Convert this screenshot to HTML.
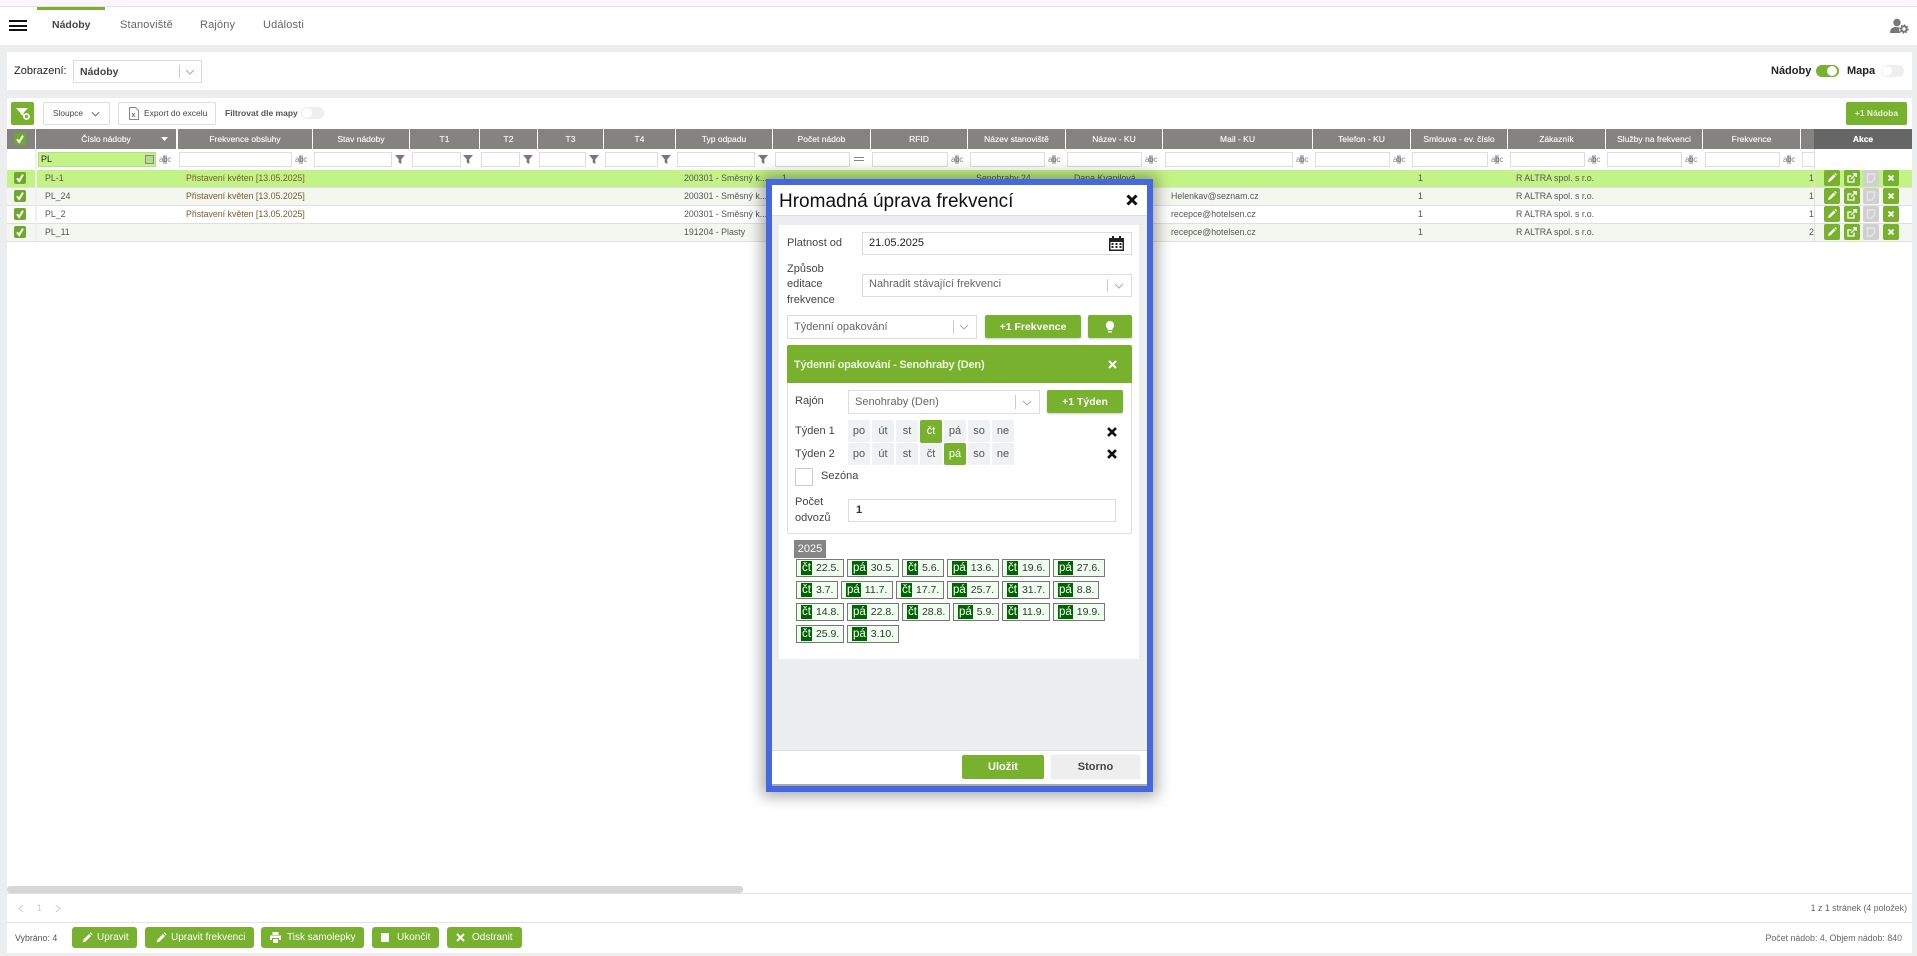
<!DOCTYPE html>
<html lang="cs"><head><meta charset="utf-8"><title>Nádoby</title>
<style>
*{box-sizing:border-box}
html,body{margin:0;padding:0;width:1917px;height:956px;overflow:hidden;background:#ecedef;font-family:"Liberation Sans",sans-serif;color:#333}
.a,.t,.h,.i,.f,.abc,.fn,.b,.cb,.r,.d,.c{position:absolute}
.t{white-space:nowrap;font-size:8.8px;line-height:12px;color:#555}
.h{top:129px;height:20px;background:#858380;color:#f4f4f4;font-size:8.5px;line-height:20px;text-align:center;white-space:nowrap;text-shadow:0 0 .5px #fff}
.i{top:152px;height:15px;background:#fff;border:1px solid #dedede}
.abc{top:153px;font-size:8px;line-height:13px;color:#888;width:12px;text-align:center;letter-spacing:-.3px}
.abc b{font-weight:normal;background:#c4c4c4;color:#666}
.fn{top:154px;width:10px;height:10px;fill:#777}
.b{background:#78b12e;color:#fff;border-radius:2px;font-weight:bold;text-align:center;white-space:nowrap}
.cb{left:14px;width:12px;height:12px;background:#6fa92c;border-radius:2px}
.cb svg,.ab svg{position:absolute;left:0;top:0}
.r{left:7px;width:1905px;height:18px;border-bottom:1px solid #dfe0df}
.ab{position:absolute;width:16px;height:16px;background:#78b12e;border-radius:2px}
.ab.g{background:#d0d0d0}
.sel{position:absolute;background:#fff;border:1px solid #dcdcdc}
.sel span{position:absolute;left:6px;top:0;white-space:nowrap}
.sel i{position:absolute;top:20%;height:60%;width:1px;background:#ccc}
.sel svg{position:absolute}
.d{width:22px;height:22px;background:#f0f1f3;font-size:11px;line-height:23px;text-align:center;color:#555;border-radius:2px}
.d.on{background:#78b12e;color:#fff}
.c{height:18px;border:1px solid #777;background:#eefdee;font-size:10.5px;line-height:16px;color:#333;white-space:nowrap;padding-left:4px}
.c b{display:inline-block;background:#006400;color:#fff;font-weight:normal;font-size:11.5px;height:14px;line-height:14px;padding:0 1px;margin-top:1px;vertical-align:top;margin-right:4px}
.lb{position:absolute;font-size:11px;line-height:14px;color:#444;white-space:nowrap}
.bb{font-size:10px;font-weight:normal;line-height:22px;top:927px;height:21px;border-radius:3px;text-align:left}
</style></head><body>
<svg width="0" height="0" style="position:absolute"><defs>
<symbol id="fu" viewBox="0 0 10 10"><path d="M0 1h10L6.3 5.2V10L3.7 8.5V5.2z"/></symbol>
<symbol id="ck" viewBox="0 0 12 12"><path d="M3 6.2L5.2 9 9 2.6" fill="none" stroke="#fff" stroke-width="2"/></symbol>
<symbol id="pen" viewBox="0 0 16 16"><path d="M4 12l.8-2.6 5-5 1.8 1.8-5 5zM10.400 3.800l.8-.8 1.800 1.800-.8.8z" fill="#fff"/></symbol>
<symbol id="ext" viewBox="0 0 16 16"><path d="M10 8.500V12H4V6h3.500" fill="none" stroke="#fff" stroke-width="1.300"/><path d="M7 9l5-5M9 3.800h3.200V7" fill="none" stroke="#fff" stroke-width="1.300"/></symbol>
<symbol id="sq" viewBox="0 0 16 16"><path d="M4.500 4h7v5l-3 3h-4z" fill="none" stroke="#e6e6e6" stroke-width="1.400"/></symbol>
<symbol id="xx" viewBox="0 0 16 16"><path d="M5.500 5.500l5 5M10.500 5.500l-5 5" stroke="#fff" stroke-width="1.800" fill="none"/></symbol>
<symbol id="xk" viewBox="0 0 16 16"><path d="M3.500 3.500l9 9M12.500 3.500l-9 9" stroke="#111" stroke-width="3" fill="none"/></symbol>
<symbol id="cv" viewBox="0 0 10 6"><path d="M1 1l4 4 4-4" fill="none" stroke="#aaa" stroke-width="1"/></symbol>
</defs></svg>

<!-- top -->
<div class="a" style="left:0;top:0;width:1917px;height:6px;background:#fdf5fd"></div>
<div class="a" style="left:0;top:6px;width:1917px;height:1px;background:#e8e0e8"></div>
<div class="a" style="left:0;top:7px;width:1917px;height:38px;background:#fff"></div>
<div class="a" style="left:37px;top:7px;width:68px;height:3px;background:#78b12e"></div>
<div class="a" style="left:9px;top:20px;width:18px;height:2px;background:#111"></div>
<div class="a" style="left:9px;top:25px;width:18px;height:2px;background:#111"></div>
<div class="a" style="left:9px;top:29px;width:18px;height:2px;background:#111"></div>
<div class="t" style="left:52px;top:19px;font-size:10.5px;font-weight:bold;color:#444">Nádoby</div>
<div class="t" style="left:120px;top:19px;font-size:11px;color:#666;letter-spacing:.15px">Stanoviště</div>
<div class="t" style="left:200px;top:19px;font-size:11px;color:#666;letter-spacing:.15px">Rajóny</div>
<div class="t" style="left:263px;top:19px;font-size:11px;color:#666;letter-spacing:.15px">Události</div>
<svg class="a" style="left:1890px;top:18px" width="20" height="16" viewBox="0 0 20 16"><circle cx="7" cy="4.500" r="3.700" fill="#777"/><path d="M0 15c0-4 2-6 6-6 2 0 3 .4 4.500 1.500V15z" fill="#777"/><circle cx="14" cy="11" r="5" fill="#fff"/><circle cx="14" cy="11" r="2.700" fill="none" stroke="#777" stroke-width="2"/><circle cx="14" cy="11" r="4" fill="none" stroke="#777" stroke-width="1.300" stroke-dasharray="1.500 1.600"/></svg>

<!-- zobrazeni -->
<div class="a" style="left:7px;top:52px;width:1905px;height:38px;background:#fff"></div>
<div class="t" style="left:14px;top:65px;font-size:11px;color:#222">Zobrazení:</div>
<div class="sel" style="left:73px;top:60px;width:129px;height:23px;font-size:10.5px;line-height:22px;font-weight:bold;color:#444"><span style="left:6px">Nádoby</span><i style="left:105px"></i><svg style="left:111px;top:8px" width="10" height="6"><use href="#cv"/></svg></div>
<div class="t" style="left:1771px;top:65px;font-size:11px;font-weight:bold;color:#222">Nádoby</div>
<div class="a" style="left:1816px;top:65px;width:23px;height:12px;border-radius:6px;background:#78b12e"></div>
<div class="a" style="left:1827px;top:66px;width:10px;height:10px;border-radius:5px;background:#fff"></div>
<div class="t" style="left:1847px;top:65px;font-size:11px;font-weight:bold;color:#222">Mapa</div>
<div class="a" style="left:1881px;top:65px;width:23px;height:12px;border-radius:6px;background:#eee"></div>
<div class="a" style="left:1882px;top:66px;width:10px;height:10px;border-radius:5px;background:#fff"></div>

<!-- main -->
<div class="a" style="left:7px;top:98px;width:1905px;height:855px;background:#fff"></div>
<div class="b" style="left:11px;top:102px;width:23px;height:23px"><svg style="position:absolute;left:5px;top:5px" width="14" height="13" viewBox="0 0 14 13"><path d="M0 1h12L7.500 6v3L4.500 7V6z" fill="#fff"/><circle cx="10.500" cy="9.500" r="2.500" fill="none" stroke="#fff" stroke-width="1.800"/></svg></div>
<div class="a" style="left:43px;top:102px;width:67px;height:23px;border:1px solid #ddd;border-radius:2px"></div>
<div class="t" style="left:53px;top:107px;font-size:8.3px;color:#444">Sloupce</div>
<svg class="a" style="left:91px;top:111px" width="9" height="6" viewBox="0 0 10 6"><path d="M1 1l4 4 4-4" fill="none" stroke="#777" stroke-width="1.200"/></svg>
<div class="a" style="left:118px;top:102px;width:98px;height:23px;border:1px solid #ddd;border-radius:2px"></div>
<svg class="a" style="left:129px;top:107px" width="10" height="13" viewBox="0 0 10 13"><path d="M.5.500h6l3 3v9h-9z" fill="none" stroke="#888"/><path d="M3 6l3 4M6 6l-3 4" stroke="#777"/></svg>
<div class="t" style="left:144px;top:107px;font-size:8.500px;color:#444">Export do excelu</div>
<div class="t" style="left:225px;top:107px;font-size:8.500px;font-weight:bold;color:#555">Filtrovat dle mapy</div>
<div class="a" style="left:301px;top:107px;width:23px;height:12px;border-radius:6px;background:#eee"></div>
<div class="a" style="left:302px;top:108px;width:10px;height:10px;border-radius:5px;background:#fff"></div>
<div class="b" style="left:1846px;top:102px;width:61px;height:23px;font-size:8.500px;line-height:23px;color:#e9f6d4">+1 Nádoba</div>

<!-- header -->
<div class="h" style="left:7px;width:28px"></div>
<div class="cb" style="top:133px"><svg width="12" height="12"><use href="#ck"/></svg></div>
<div class="h" style="left:36px;width:140px">Číslo nádoby</div>
<svg class="a" style="left:161px;top:137px" width="7" height="4"><path d="M0 0h7L3.500 4z" fill="#fff"/></svg>
<div class="h" style="left:178px;width:134px">Frekvence obsluhy</div>
<div class="h" style="left:313px;width:96px">Stav nádoby</div>
<div class="h" style="left:410px;width:69px">T1</div>
<div class="h" style="left:480px;width:57px">T2</div>
<div class="h" style="left:538px;width:65px">T3</div>
<div class="h" style="left:604px;width:71px">T4</div>
<div class="h" style="left:676px;width:96px">Typ odpadu</div>
<div class="h" style="left:773px;width:97px">Počet nádob</div>
<div class="h" style="left:871px;width:96px">RFID</div>
<div class="h" style="left:968px;width:97px">Název stanoviště</div>
<div class="h" style="left:1066px;width:96px">Název - KU</div>
<div class="h" style="left:1163px;width:149px">Mail - KU</div>
<div class="h" style="left:1313px;width:97px">Telefon - KU</div>
<div class="h" style="left:1411px;width:96px">Smlouva - ev. číslo</div>
<div class="h" style="left:1508px;width:97px">Zákazník</div>
<div class="h" style="left:1606px;width:96px">Služby na frekvenci</div>
<div class="h" style="left:1703px;width:97px">Frekvence</div>
<div class="h" style="left:1801px;width:13px"></div>
<div class="h" style="left:1814px;width:98px;background:#666;color:#fff;font-weight:bold">Akce</div>

<!-- filters -->
<div class="i" style="left:38px;width:118px;background:#c3f386;border-color:#b5dc86;font-size:9px;line-height:13px;color:#222;padding-left:2px">PL</div>
<div class="a" style="left:145px;top:155px;width:9px;height:9px;background:#b8d890;border:1px solid #888"></div>
<div class="abc" style="left:159px">a<b>b</b>c</div>
<div class="i" style="left:179px;width:113px"></div><div class="abc" style="left:295px">a<b>b</b>c</div>
<div class="i" style="left:314px;width:78px"></div><svg class="fn" style="left:395px"><use href="#fu"/></svg>
<div class="i" style="left:412px;width:49px"></div><svg class="fn" style="left:463px"><use href="#fu"/></svg>
<div class="i" style="left:481px;width:39px"></div><svg class="fn" style="left:523px"><use href="#fu"/></svg>
<div class="i" style="left:539px;width:47px"></div><svg class="fn" style="left:589px"><use href="#fu"/></svg>
<div class="i" style="left:605px;width:53px"></div><svg class="fn" style="left:661px"><use href="#fu"/></svg>
<div class="i" style="left:677px;width:78px"></div><svg class="fn" style="left:758px"><use href="#fu"/></svg>
<div class="i" style="left:775px;width:75px"></div>
<div class="a" style="left:854px;top:157px;width:10px;height:1px;background:#888"></div><div class="a" style="left:854px;top:160px;width:10px;height:1px;background:#888"></div>
<div class="i" style="left:872px;width:76px"></div><div class="abc" style="left:951px">a<b>b</b>c</div>
<div class="i" style="left:970px;width:75px"></div><div class="abc" style="left:1048px">a<b>b</b>c</div>
<div class="i" style="left:1067px;width:75px"></div><div class="abc" style="left:1145px">a<b>b</b>c</div>
<div class="i" style="left:1165px;width:128px"></div><div class="abc" style="left:1296px">a<b>b</b>c</div>
<div class="i" style="left:1315px;width:75px"></div><div class="abc" style="left:1393px">a<b>b</b>c</div>
<div class="i" style="left:1412px;width:76px"></div><div class="abc" style="left:1491px">a<b>b</b>c</div>
<div class="i" style="left:1510px;width:75px"></div><div class="abc" style="left:1588px">a<b>b</b>c</div>
<div class="i" style="left:1607px;width:75px"></div><div class="abc" style="left:1685px">a<b>b</b>c</div>
<div class="i" style="left:1705px;width:75px"></div><div class="abc" style="left:1783px">a<b>b</b>c</div>
<div class="i" style="left:1802px;width:13px"></div>
<div class="a" style="left:1814px;top:149px;width:98px;height:20px;background:#fff"></div>

<!-- rows -->
<div class="r" style="top:170px;background:#c3f386"></div>
<div class="r" style="top:188px;background:#f4f7ef"></div>
<div class="r" style="top:206px;background:#fff"></div>
<div class="r" style="top:224px;background:#f4f7ef"></div>
<div class="a" style="left:35px;top:149px;width:2px;height:92px;background:#f0f0f0"></div>
<div class="a" style="left:1814px;top:149px;width:1px;height:92px;background:#e0e0e0"></div>
<div class="cb" style="top:172px"><svg width="12" height="12"><use href="#ck"/></svg></div>
<div class="cb" style="top:190px"><svg width="12" height="12"><use href="#ck"/></svg></div>
<div class="cb" style="top:208px"><svg width="12" height="12"><use href="#ck"/></svg></div>
<div class="cb" style="top:226px"><svg width="12" height="12"><use href="#ck"/></svg></div>

<div class="t" style="left:45px;top:172px">PL-1</div>
<div class="t" style="left:45px;top:190px">PL_24</div>
<div class="t" style="left:45px;top:208px">PL_2</div>
<div class="t" style="left:45px;top:226px">PL_11</div>
<div class="t" style="left:186px;top:172px;color:#7a5a30">Přistavení květen [13.05.2025]</div>
<div class="t" style="left:186px;top:190px;color:#7a5a30">Přistavení květen [13.05.2025]</div>
<div class="t" style="left:186px;top:208px;color:#7a5a30">Přistavení květen [13.05.2025]</div>
<div class="t" style="left:684px;top:172px">200301 - Směsný k...</div>
<div class="t" style="left:684px;top:190px">200301 - Směsný k...</div>
<div class="t" style="left:684px;top:208px">200301 - Směsný k...</div>
<div class="t" style="left:684px;top:226px">191204 - Plasty</div>
<div class="t" style="left:782px;top:172px">1</div>
<div class="t" style="left:976px;top:172px">Senohraby 24</div>
<div class="t" style="left:1074px;top:172px">Dana Kvapilová</div>
<div class="t" style="left:1171px;top:190px">Helenkav@seznam.cz</div>
<div class="t" style="left:1171px;top:208px">recepce@hotelsen.cz</div>
<div class="t" style="left:1171px;top:226px">recepce@hotelsen.cz</div>
<div class="t" style="left:1418px;top:172px">1</div>
<div class="t" style="left:1418px;top:190px">1</div>
<div class="t" style="left:1418px;top:208px">1</div>
<div class="t" style="left:1418px;top:226px">1</div>
<div class="t" style="left:1516px;top:172px">R ALTRA spol. s r.o.</div>
<div class="t" style="left:1516px;top:190px">R ALTRA spol. s r.o.</div>
<div class="t" style="left:1516px;top:208px">R ALTRA spol. s r.o.</div>
<div class="t" style="left:1516px;top:226px">R ALTRA spol. s r.o.</div>
<div class="t" style="left:1809px;top:172px">1</div>
<div class="t" style="left:1809px;top:190px">1</div>
<div class="t" style="left:1809px;top:208px">1</div>
<div class="t" style="left:1809px;top:226px">2</div>

<div class="ab" style="left:1824px;top:170px"><svg width="16" height="16"><use href="#pen"/></svg></div><div class="ab" style="left:1844px;top:170px"><svg width="16" height="16"><use href="#ext"/></svg></div><div class="ab g" style="left:1863px;top:170px"><svg width="16" height="16"><use href="#sq"/></svg></div><div class="ab" style="left:1883px;top:170px"><svg width="16" height="16"><use href="#xx"/></svg></div>
<div class="ab" style="left:1824px;top:188px"><svg width="16" height="16"><use href="#pen"/></svg></div><div class="ab" style="left:1844px;top:188px"><svg width="16" height="16"><use href="#ext"/></svg></div><div class="ab g" style="left:1863px;top:188px"><svg width="16" height="16"><use href="#sq"/></svg></div><div class="ab" style="left:1883px;top:188px"><svg width="16" height="16"><use href="#xx"/></svg></div>
<div class="ab" style="left:1824px;top:206px"><svg width="16" height="16"><use href="#pen"/></svg></div><div class="ab" style="left:1844px;top:206px"><svg width="16" height="16"><use href="#ext"/></svg></div><div class="ab g" style="left:1863px;top:206px"><svg width="16" height="16"><use href="#sq"/></svg></div><div class="ab" style="left:1883px;top:206px"><svg width="16" height="16"><use href="#xx"/></svg></div>
<div class="ab" style="left:1824px;top:224px"><svg width="16" height="16"><use href="#pen"/></svg></div><div class="ab" style="left:1844px;top:224px"><svg width="16" height="16"><use href="#ext"/></svg></div><div class="ab g" style="left:1863px;top:224px"><svg width="16" height="16"><use href="#sq"/></svg></div><div class="ab" style="left:1883px;top:224px"><svg width="16" height="16"><use href="#xx"/></svg></div>

<!-- bottom -->
<div class="a" style="left:7px;top:886px;width:736px;height:7px;background:#d6d6d6;border-radius:3px"></div>
<div class="a" style="left:7px;top:893px;width:1905px;height:1px;background:#e4e4e4"></div>
<div class="a" style="left:7px;top:922px;width:1905px;height:1px;background:#e4e4e4"></div>
<svg class="a" style="left:17px;top:904px" width="44" height="9" fill="none" stroke="#ccc"><path d="M6 1L2 4.500 6 8M39 1l4 3.500L39 8"/></svg>
<div class="t" style="left:37px;top:902px;color:#ccc">1</div>
<div class="t" style="right:10px;top:902px;color:#666">1 z 1 stránek (4 položek)</div>
<div class="t" style="left:15px;top:932px;color:#555">Vybráno: 4</div>
<div class="t" style="right:15px;top:932px;color:#666">Počet nádob: 4, Objem nádob: 840</div>

<div class="b bb" style="left:72px;width:65px;padding-left:25px">Upravit</div>
<svg class="a" style="left:78px;top:929px" width="18" height="18" viewBox="0 0 16 16"><use href="#pen"/></svg>
<div class="b bb" style="left:145px;width:109px;padding-left:26px">Upravit frekvenci</div>
<svg class="a" style="left:152px;top:929px" width="18" height="18" viewBox="0 0 16 16"><use href="#pen"/></svg>
<div class="b bb" style="left:261px;width:103px;padding-left:26px">Tisk samolepky</div>
<svg class="a" style="left:270px;top:932px" width="11" height="11" viewBox="0 0 11 11"><path d="M2.500 0h6v3h-6zM0 3.500h11V8H9V6H2v2H0zM3 7h5v4H3z" fill="#fff"/></svg>
<div class="b bb" style="left:372px;width:67px;padding-left:25px">Ukončit</div>
<div class="a" style="left:381px;top:933px;width:8px;height:9px;background:#fff;border-radius:1px"></div>
<div class="b bb" style="left:447px;width:75px;padding-left:25px">Odstranit</div>
<svg class="a" style="left:456px;top:933px" width="9" height="9" viewBox="0 0 9 9"><path d="M1 1l7 7M8 1L1 8" stroke="#fff" stroke-width="2" fill="none"/></svg>

<!-- modal -->
<div class="a" style="left:766px;top:179px;width:387px;height:613px;background:#4568e0;box-shadow:0 0 14px 4px rgba(0,0,0,.35)"></div>
<div class="a" style="left:772px;top:185px;width:375px;height:601px;background:#ecedef"></div>
<div class="a" style="left:772px;top:185px;width:375px;height:31px;background:#fff;border-bottom:1px solid #ddd"></div>
<div class="t" style="left:779px;top:189px;font-size:19px;line-height:25px;color:#111">Hromadná úprava frekvencí</div>
<svg class="a" style="left:1124px;top:192px" width="16" height="16"><use href="#xk"/></svg>

<div class="a" style="left:779px;top:225px;width:360px;height:434px;background:#fff"></div>
<div class="lb" style="left:787px;top:236px">Platnost od</div>
<div class="a" style="left:862px;top:232px;width:270px;height:23px;border:1px solid #dcdcdc;font-size:11px;line-height:21px;padding-left:6px;color:#222">21.05.2025</div>
<svg class="a" style="left:1109px;top:236px" width="15" height="15" viewBox="0 0 15 15"><path d="M0 2h15v13H0z" fill="#222"/><path d="M1.500 6h12v7.500h-12z" fill="#fff"/><path d="M2.500 7h2v2h-2zM6.500 7h2v2h-2zM10.500 7h2v2h-2zM2.500 10h2v2h-2zM6.500 10h2v2h-2zM10.500 10h2v2h-2zM3 0h2v3H3zM10 0h2v3h-2z" fill="#222"/></svg>
<div class="lb" style="left:787px;top:262px">Způsob</div>
<div class="lb" style="left:787px;top:277px">editace</div>
<div class="lb" style="left:787px;top:293px">frekvence</div>
<div class="sel" style="left:862px;top:274px;width:270px;height:23px;font-size:11px;line-height:19px;color:#666"><span>Nahradit stávající frekvenci</span><i style="left:244px"></i><svg style="left:251px;top:8px" width="10" height="6"><use href="#cv"/></svg></div>
<div class="sel" style="left:787px;top:315px;width:190px;height:24px;font-size:11px;line-height:22px;color:#666"><span>Týdenní opakování</span><i style="left:165px"></i><svg style="left:171px;top:8px" width="10" height="6"><use href="#cv"/></svg></div>
<div class="b" style="left:985px;top:315px;width:96px;height:23px;font-size:10.5px;line-height:25px;box-shadow:0 1px 2px rgba(0,0,0,.2)">+1 Frekvence</div>
<div class="b" style="left:1088px;top:315px;width:44px;height:23px;box-shadow:0 1px 2px rgba(0,0,0,.2)"><svg style="position:absolute;left:17px;top:6px" width="10" height="12" viewBox="0 0 10 12"><path d="M5 0a4.200 4.200 0 0 1 2.500 7.500V9h-5V7.500A4.200 4.200 0 0 1 5 0zM3 10h4v1.500H3z" fill="#fff"/></svg></div>

<div class="a" style="left:787px;top:345px;width:345px;height:38px;background:#78b12e;border-radius:2px 2px 0 0"></div>
<div class="t" style="left:794px;top:358px;font-size:11px;line-height:14px;font-weight:bold;color:#eef7df;letter-spacing:-.2px">Týdenní opakování - Senohraby (Den)</div>
<svg class="a" style="left:1108px;top:360px" width="9" height="9" viewBox="0 0 9 9"><path d="M1 1l7 7M8 1L1 8" stroke="#fff" stroke-width="2" fill="none"/></svg>
<div class="a" style="left:787px;top:383px;width:345px;height:151px;border:1px solid #ddd;border-top:0;border-radius:0 0 2px 2px"></div>
<div class="lb" style="left:795px;top:394px">Rajón</div>
<div class="sel" style="left:848px;top:390px;width:192px;height:24px;font-size:11px;line-height:22px;color:#666"><span>Senohraby (Den)</span><i style="left:166px"></i><svg style="left:173px;top:9px" width="10" height="6"><use href="#cv"/></svg></div>
<div class="b" style="left:1047px;top:390px;width:76px;height:23px;font-size:10.5px;line-height:25px;box-shadow:0 1px 2px rgba(0,0,0,.2)">+1 Týden</div>

<div class="lb" style="left:795px;top:424px">Týden 1</div>
<div class="d" style="left:848px;top:420px">po</div><div class="d" style="left:872px;top:420px">út</div><div class="d" style="left:896px;top:420px">st</div><div class="d on" style="left:920px;top:420px;height:23px">čt</div><div class="d" style="left:944px;top:420px">pá</div><div class="d" style="left:968px;top:420px">so</div><div class="d" style="left:992px;top:420px">ne</div>
<svg class="a" style="left:1105px;top:425px" width="14" height="14"><use href="#xk"/></svg>
<div class="lb" style="left:795px;top:447px">Týden 2</div>
<div class="d" style="left:848px;top:443px">po</div><div class="d" style="left:872px;top:443px">út</div><div class="d" style="left:896px;top:443px">st</div><div class="d" style="left:920px;top:443px">čt</div><div class="d on" style="left:944px;top:443px">pá</div><div class="d" style="left:968px;top:443px">so</div><div class="d" style="left:992px;top:443px">ne</div>
<svg class="a" style="left:1105px;top:447px" width="14" height="14"><use href="#xk"/></svg>
<div class="a" style="left:795px;top:468px;width:18px;height:18px;border:1px solid #ccc"></div>
<div class="lb" style="left:821px;top:469px">Sezóna</div>
<div class="lb" style="left:795px;top:495px">Počet</div>
<div class="lb" style="left:795px;top:511px">odvozů</div>
<div class="a" style="left:848px;top:499px;width:268px;height:23px;border:1px solid #dcdcdc;font-size:11px;line-height:21px;padding-left:7px;color:#333;font-weight:bold">1</div>

<div class="a" style="left:794px;top:540px;width:32px;height:18px;background:#858585;color:#fff;font-size:11px;line-height:18px;text-align:center">2025</div>

<div class="c" style="left:796px;top:559px;width:48px"><b>čt</b>22.5.</div>
<div class="c" style="left:847px;top:559px;width:52px"><b>pá</b>30.5.</div>
<div class="c" style="left:902px;top:559px;width:42px"><b>čt</b>5.6.</div>
<div class="c" style="left:947px;top:559px;width:52px"><b>pá</b>13.6.</div>
<div class="c" style="left:1002px;top:559px;width:48px"><b>čt</b>19.6.</div>
<div class="c" style="left:1053px;top:559px;width:52px"><b>pá</b>27.6.</div>
<div class="c" style="left:796px;top:581px;width:42px"><b>čt</b>3.7.</div>
<div class="c" style="left:841px;top:581px;width:52px"><b>pá</b>11.7.</div>
<div class="c" style="left:896px;top:581px;width:48px"><b>čt</b>17.7.</div>
<div class="c" style="left:947px;top:581px;width:52px"><b>pá</b>25.7.</div>
<div class="c" style="left:1002px;top:581px;width:48px"><b>čt</b>31.7.</div>
<div class="c" style="left:1053px;top:581px;width:46px"><b>pá</b>8.8.</div>
<div class="c" style="left:796px;top:603px;width:48px"><b>čt</b>14.8.</div>
<div class="c" style="left:847px;top:603px;width:52px"><b>pá</b>22.8.</div>
<div class="c" style="left:902px;top:603px;width:48px"><b>čt</b>28.8.</div>
<div class="c" style="left:953px;top:603px;width:46px"><b>pá</b>5.9.</div>
<div class="c" style="left:1002px;top:603px;width:48px"><b>čt</b>11.9.</div>
<div class="c" style="left:1053px;top:603px;width:52px"><b>pá</b>19.9.</div>
<div class="c" style="left:796px;top:625px;width:48px"><b>čt</b>25.9.</div>
<div class="c" style="left:847px;top:625px;width:52px"><b>pá</b>3.10.</div>

<div class="a" style="left:772px;top:750px;width:375px;height:34px;background:#fff;border-top:1px solid #ddd"></div>
<div class="a" style="left:772px;top:784px;width:375px;height:2px;background:#aaa"></div>
<div class="b" style="left:962px;top:755px;width:82px;height:24px;font-size:11px;line-height:24px">Uložit</div>
<div class="a" style="left:1051px;top:755px;width:89px;height:24px;background:#eee;border-radius:2px;font-size:11px;line-height:24px;text-align:center;color:#444;font-weight:bold;box-shadow:0 0 1px rgba(0,0,0,.2)">Storno</div>
</body></html>
